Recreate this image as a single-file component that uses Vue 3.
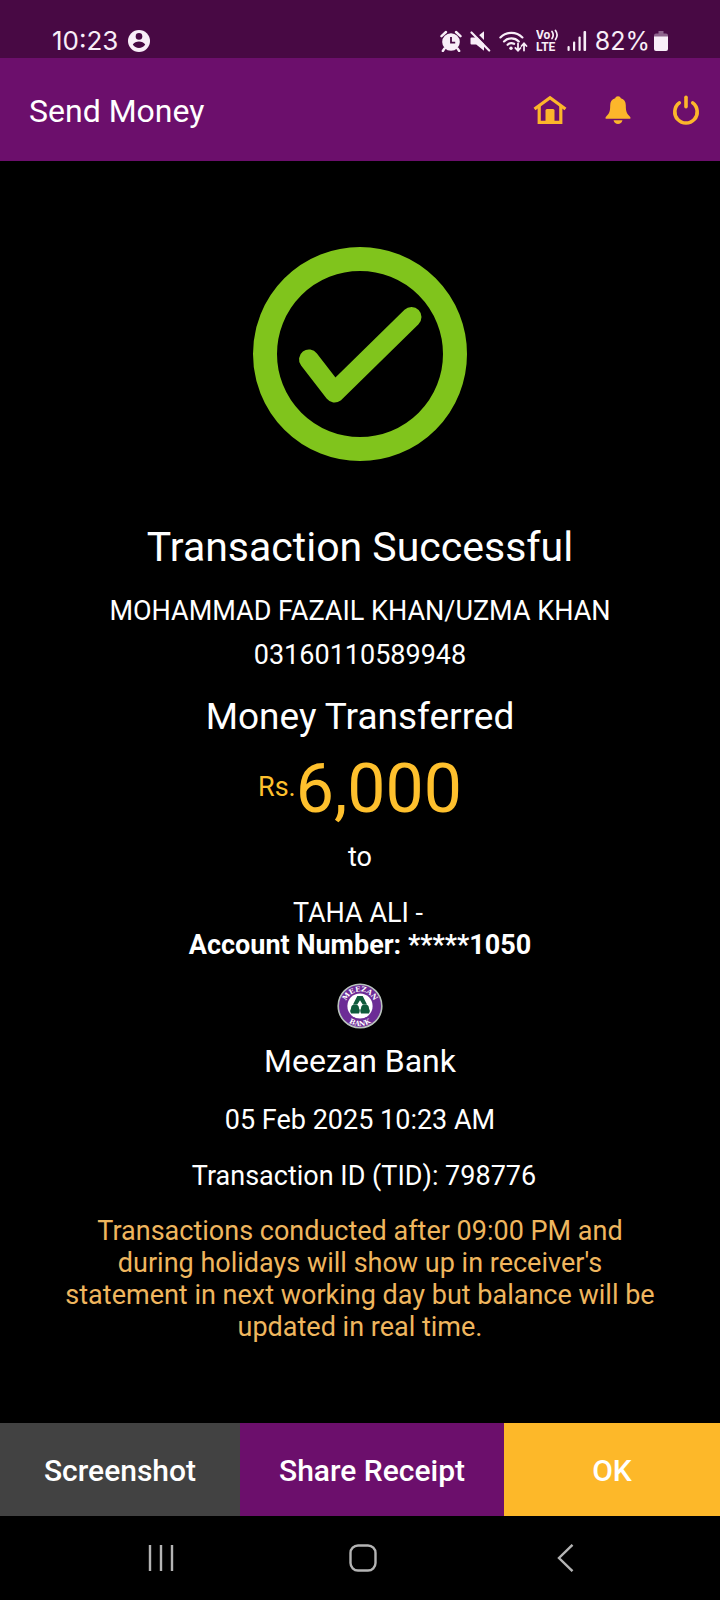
<script setup>
const appActions = ['home', 'notifications', 'logout']

const sender = { name: 'MOHAMMAD FAZAIL KHAN/UZMA KHAN', account: '03160110589948' }
const receiver = { name: 'TAHA ALI -', account: '*****1050', bank: 'Meezan Bank' }
const transfer = { amount: '6,000', date: '05 Feb 2025 10:23 AM', tid: '798776' }
</script>

<template>
  <div class="screen">
    <div class="status">
      <span class="clock">10:23</span>
      <svg class="person" width="22" height="22" viewBox="0 0 22 22" aria-hidden="true">
        <circle cx="11" cy="11" r="11" fill="#f8eef8" />
        <circle cx="11" cy="6.4" r="3.3" fill="#480944" />
        <path d="M4.8 14.6C6 12.4 8.500 11.400 11 11.400s5 1 6.200 3.200c-1.200 2.200-3.700 3.400-6.200 3.400s-5-1.200-6.200-3.400z" fill="#480944" />
      </svg>
      <div class="indicators">
        <svg width="22" height="22" viewBox="0 0 22 22" aria-hidden="true">
          <circle cx="11" cy="12" r="8.800" fill="#f8eef8" />
          <path d="M1.500 6.200 6 2M20.500 6.200 16 2M4.500 18.500 2.800 21M17.500 18.500 19.200 21" stroke="#f8eef8" stroke-width="2.400" stroke-linecap="round" />
          <path d="M11 7v5.600h4.200" fill="none" stroke="#480944" stroke-width="1.800" />
        </svg>
        <svg width="21" height="22" viewBox="0 0 21 22" aria-hidden="true">
          <path d="M1.500 7.500h4.700L14 1.200v19.600l-7.800-6.300H1.500a1 1 0 0 1-1-1v-5a1 1 0 0 1 1-1z" fill="#f8eef8" />
          <path d="M3.500 1.500 21 19" stroke="#480944" stroke-width="3" />
          <path d="M1.500 2.500 19.200 20.500" stroke="#f8eef8" stroke-width="2.200" stroke-linecap="round" />
        </svg>
        <svg width="29" height="22" viewBox="0 0 29 22" fill="none" stroke="#f8eef8" stroke-width="2.200" stroke-linecap="round" aria-hidden="true">
          <path d="M1.400 7.400a15.500 15.500 0 0 1 22 0M5 11.400a10.400 10.400 0 0 1 14.800 0M8.600 14.800a5.600 5.600 0 0 1 6.500-1" />
          <circle cx="12" cy="18.200" r="1.700" fill="#f8eef8" stroke="none" />
          <path d="M19 13.500v7M16.400 18l2.600 2.600 2.500-2.600M25 20.500v-7M22.500 16l2.500-2.600 2.500 2.600" stroke-width="1.800" />
        </svg>
        <svg width="23" height="30" viewBox="0 -4 23 30" aria-label="VoLTE" role="img">
          <text class="volte" x="0" y="9">Vo</text>
          <path d="M16 1.500q2.400 3.500 0 7M19.500 0.500q3.200 4.500 0 9" fill="none" stroke="#f8eef8" stroke-width="1.700" stroke-linecap="round" />
          <text class="volte" x="0" y="21">LTE</text>
        </svg>
        <svg width="20" height="22" viewBox="0 0 20 22" fill="#f8eef8" aria-hidden="true">
          <rect x="0.500" y="16" width="2.200" height="5" rx="1" />
          <rect x="6" y="11.500" width="2.200" height="9.500" rx="1" />
          <rect x="11.500" y="6.500" width="2.200" height="14.500" rx="1" />
          <rect x="16.500" y="1" width="2.600" height="20" rx="1" />
        </svg>
        <span class="battery">
          82%
          <svg width="14" height="20" viewBox="0 0 14 20" aria-hidden="true">
            <path d="M4.500 0h5v2.500H12a2 2 0 0 1 2 2V6H0V4.500a2 2 0 0 1 2-2h2.500z" fill="#8e648d" />
            <path d="M0 5.500h14V18a2 2 0 0 1-2 2H2a2 2 0 0 1-2-2z" fill="#f8eef8" />
          </svg>
        </span>
      </div>
    </div>

    <header class="appbar">
      <h1>Send Money</h1>
      <nav class="actions">
        <button v-for="action in appActions" :key="action" type="button" :aria-label="action">
          <svg v-if="action === 'home'" width="34" height="30" viewBox="0 0 34 30" aria-hidden="true">
            <path d="M1.500 14 17 2.800 32.500 14" fill="none" stroke="#fcb62b" stroke-width="3.200" />
            <path d="M6.200 11v16.400h21.600V11" fill="none" stroke="#fcb62b" stroke-width="3.200" />
            <path d="M12.500 27V15.500a1.500 1.500 0 0 1 1.500-1.500h6a1.500 1.500 0 0 1 1.500 1.500V27z" fill="#fcb62b" />
          </svg>
          <svg v-else-if="action === 'notifications'" width="26" height="30" viewBox="0 0 26 30" fill="#fcb62b" aria-hidden="true">
            <path d="M13 1.200c1.500 0 2.500.8 2.800 2 3.400 1 5 3.600 5 7 0 6.800 1 8.300 4.200 11.500.9 1 .6 2.100-.6 2.100H1.600c-1.200 0-1.500-1.100-.6-2.100 3.200-3.200 4.200-4.700 4.200-11.500 0-3.400 1.600-6 5-7 .3-1.200 1.300-2 2.800-2z" />
            <path d="M8.500 25.300h9c-.7 2.500-2.300 3.800-4.500 3.800s-3.800-1.300-4.500-3.800z" />
          </svg>
          <svg v-else width="28" height="30" viewBox="0 0 28 30" fill="none" stroke="#fcb62b" stroke-width="3.600" stroke-linecap="round" aria-hidden="true">
            <path d="M7.300 7.900a11.200 11.200 0 1 0 13.400 0" />
            <path d="M14 2.200v9.600" />
          </svg>
        </button>
      </nav>
    </header>

    <main class="receipt">
      <svg class="tick" width="214" height="214" viewBox="0 0 214 214" fill="none" stroke="#80c41c" role="img" aria-label="Success">
        <circle cx="107" cy="107" r="95" stroke-width="24" />
        <path d="M56 112.500 81.500 145.500 158.500 70" stroke-width="20" stroke-linecap="round" stroke-linejoin="round" />
      </svg>
      <h2 class="title">Transaction Successful</h2>
      <p class="sender">{{ sender.name }}</p>
      <p class="number">{{ sender.account }}</p>
      <h3 class="subtitle">Money Transferred</h3>
      <p class="amount"><span class="currency">Rs.</span>{{ transfer.amount }}</p>
      <p class="to">to</p>
      <p class="receiver">{{ receiver.name }}</p>
      <p><strong>Account Number: {{ receiver.account }}</strong></p>
      <svg class="logo" width="46" height="46" viewBox="0 0 46 46" role="img" aria-label="Meezan Bank logo">
        <defs>
          <path id="arc-top" d="M11.300 32.700A14.900 14.900 0 1 1 34.700 32.700" />
          <path id="arc-bottom" d="M3 23A20 20 0 0 0 43 23" />
        </defs>
        <circle cx="23" cy="23" r="21.800" fill="#6c2c96" stroke="#b9c4bd" stroke-width="1.600" />
        <circle cx="23" cy="23" r="12.600" fill="#fff" />
        <text class="ring"><textPath href="#arc-top" startOffset="50%" text-anchor="middle">MEEZAN</textPath></text>
        <text class="ring"><textPath href="#arc-bottom" startOffset="50%" text-anchor="middle">BANK</textPath></text>
        <path d="M20.300 13h5.400l4.300 8.500h-4.300L23 17.200l-2.700 4.300H16z" fill="#0e5a3c" />
        <path d="M18 21.500a4 4 0 0 1 4 4q1.500 1.500 0 5h-8q-1.600-3 0-5a4 4 0 0 1 4-4zM28 21.500a4 4 0 0 1 4 4q1.600 2 0 5h-8q-1.500-3.500 0-5a4 4 0 0 1 4-4z" fill="#0e5a3c" />
      </svg>
      <p class="bank">{{ receiver.bank }}</p>
      <p class="detail">{{ transfer.date }}</p>
      <p class="detail tid">Transaction ID (TID): {{ transfer.tid }}</p>
      <p class="note">
        Transactions conducted after 09:00 PM and during holidays will show up in receiver's
        statement in next working day but balance will be updated in real time.
      </p>
    </main>

    <footer class="choices">
      <button type="button" class="grey">Screenshot</button>
      <button type="button" class="purple">Share Receipt</button>
      <button type="button" class="yellow">OK</button>
    </footer>

    <nav class="system">
      <button type="button" aria-label="Recent apps">
        <svg width="28" height="28" viewBox="0 0 28 28" stroke="#b4b4b4" stroke-width="2.400">
          <path d="M3 1v26M14 1v26M25 1v26" />
        </svg>
      </button>
      <button type="button" aria-label="Home screen">
        <svg width="28" height="28" viewBox="0 0 28 28" fill="none" stroke="#b4b4b4" stroke-width="2.400">
          <rect x="1.500" y="1.500" width="25" height="25" rx="7.500" />
        </svg>
      </button>
      <button type="button" aria-label="Back">
        <svg width="28" height="28" viewBox="0 0 28 28" fill="none" stroke="#b4b4b4" stroke-width="2.400">
          <path d="M21.500 0.800 8 14l13.500 13.200" />
        </svg>
      </button>
    </nav>
  </div>
</template>

<style>
body {
  margin: 0;
  background: #000;
}
</style>

<style scoped>
.screen {
  display: flex;
  flex-direction: column;
  min-height: 100vh;
  background: #000;
  color: #fff;
  font-family: Roboto, "Liberation Sans", sans-serif;
  font-size: 27px;
  line-height: 32px;
}

h1, h2, h3, p {
  margin: 0;
  font-weight: 400;
}

svg {
  display: block;
  flex: none;
}

button {
  display: flex;
  align-items: center;
  justify-content: center;
  margin: 0;
  padding: 0;
  border: 0;
  background: none;
  color: inherit;
  font: inherit;
  cursor: pointer;
}

.status {
  display: flex;
  align-items: center;
  padding: 25px 52px 1px;
  background: #480944;
  color: #f8eef8;
  font-family: Inter, Roboto, sans-serif;
  font-size: 26px;
}

.person {
  margin-left: 10px;
}

.indicators {
  display: flex;
  align-items: center;
  gap: 8px;
  margin-left: auto;
}

.battery {
  display: flex;
  align-items: center;
  gap: 4px;
  font-size: 25px;
}

.volte {
  fill: #f8eef8;
  font-family: Roboto, sans-serif;
  font-size: 12px;
  font-weight: 700;
}

.appbar {
  display: flex;
  align-items: center;
  justify-content: space-between;
  height: 103px;
  padding-left: 29px;
  background: #6c0f6c;
}

.appbar h1 {
  padding-top: 2px;
  font-size: 32px;
  line-height: 40px;
}

.actions {
  display: flex;
}

.actions button {
  width: 68px;
  height: 68px;
}

.receipt {
  display: flex;
  flex: 1;
  flex-direction: column;
  align-items: center;
  padding: 86px 60px 0;
  text-align: center;
}

.title {
  margin-top: 62px;
  font-size: 41px;
  line-height: 48px;
}

.sender {
  margin-top: 24px;
}

.number {
  margin-top: 12px;
}

.subtitle {
  margin-top: 24px;
  font-size: 37px;
  line-height: 44px;
}

.amount {
  display: flex;
  align-items: center;
  margin-top: 10px;
  color: #fec02d;
  font-size: 68px;
  line-height: 80px;
}

.currency {
  padding-bottom: 4px;
  font-size: 27px;
  line-height: 32px;
}

.to {
  margin-top: 12px;
}

.receiver {
  margin-top: 24px;
  padding-right: 4px;
}

.logo {
  margin-top: 22px;
}

.ring {
  fill: #fff;
  font-family: "DejaVu Serif", serif;
  font-size: 7px;
  font-weight: 700;
}

.bank {
  margin-top: 12px;
  font-size: 32px;
  line-height: 40px;
}

.detail {
  margin-top: 23px;
}

.tid {
  margin-top: 24px;
  padding-left: 8px;
}

.note {
  margin-top: 23px;
  color: #efb65e;
}

.choices {
  display: grid;
  grid-template-columns: 10fr 11fr 9fr;
  height: 93px;
  font-size: 30px;
  font-weight: 500;
}

.choices button {
  padding-top: 2px;
}

.grey {
  background: #424242;
}

.purple {
  background: #6c0f6c;
}

.yellow {
  background: #fdb829;
}

.system {
  display: grid;
  grid-template-columns: repeat(3, 1fr);
  height: 84px;
  padding: 0 54px 0 60px;
}
</style>
